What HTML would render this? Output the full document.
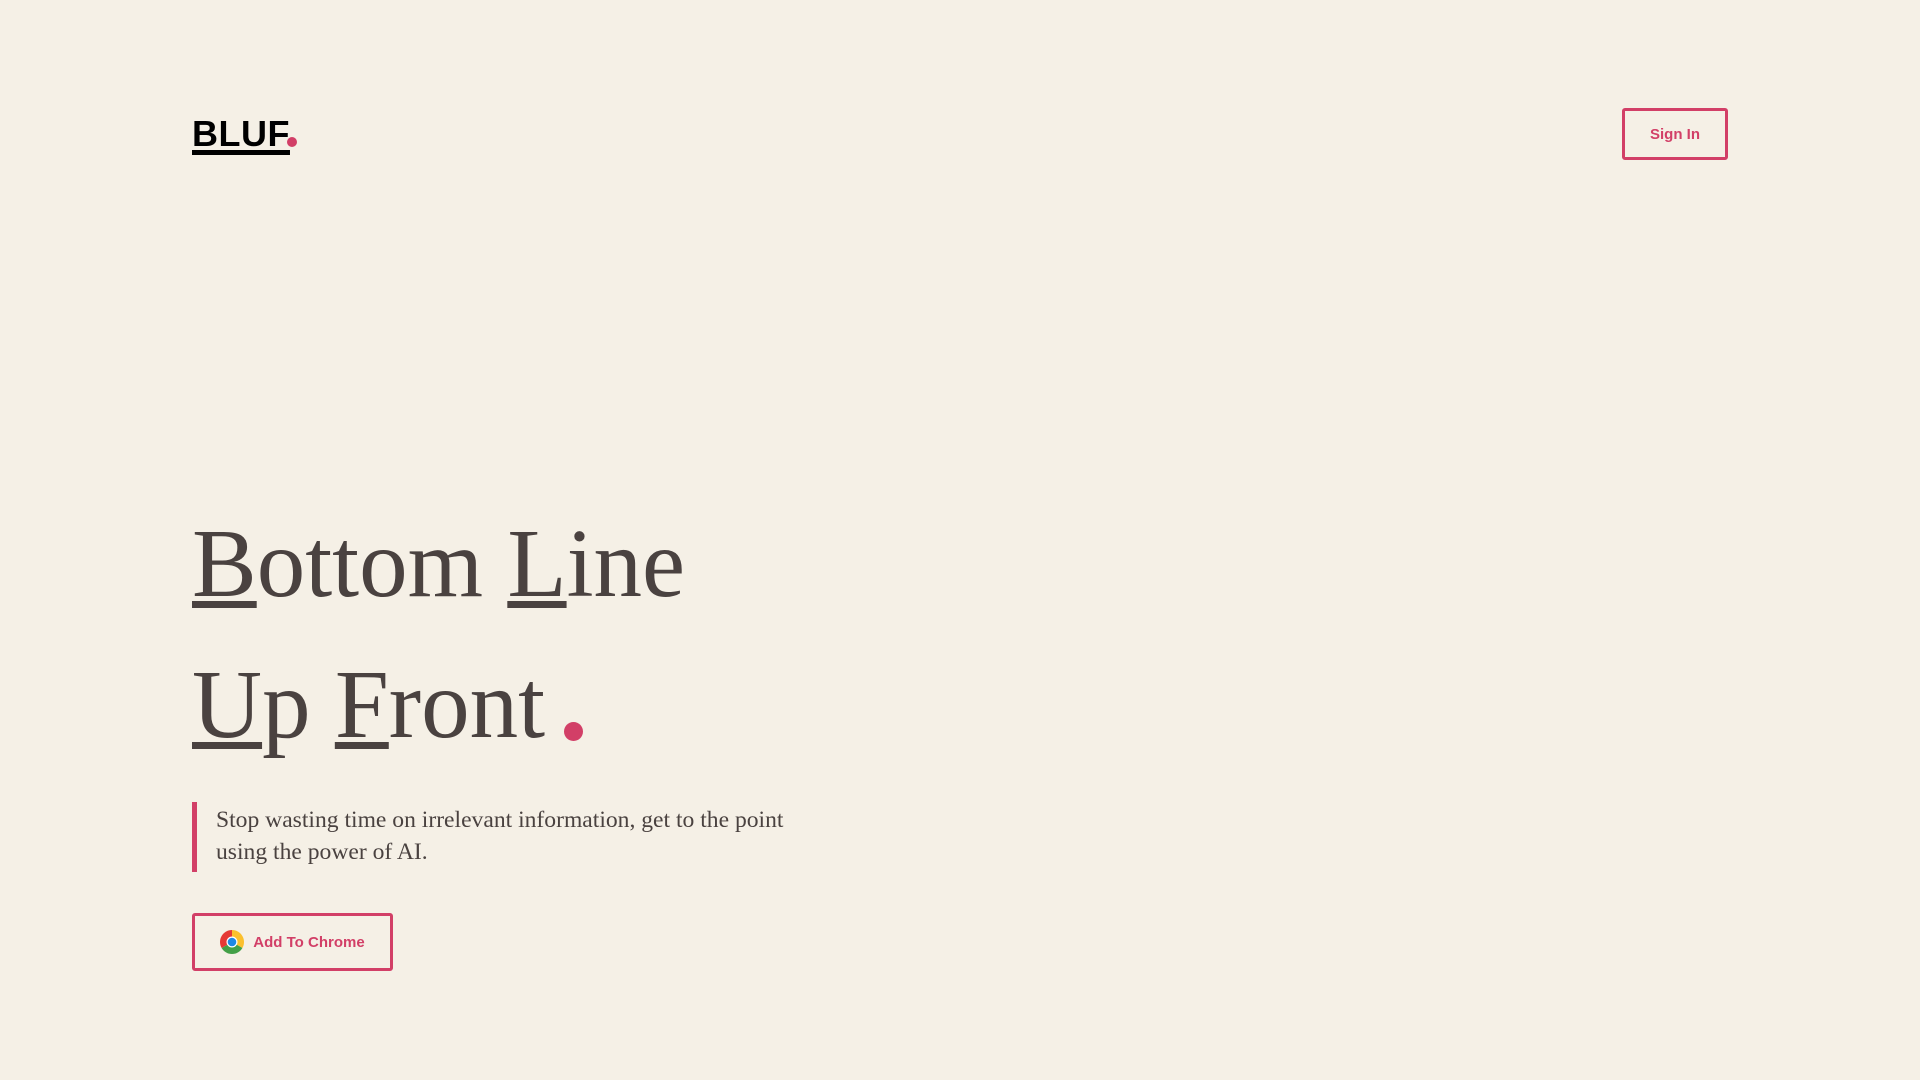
<!DOCTYPE html>
<html><head><meta charset="utf-8"><style>
html,body{margin:0;padding:0;background:#f5f0e6;width:1920px;height:1080px;overflow:hidden}
.logo{position:absolute;left:192px;top:113px;font-family:"Liberation Sans",sans-serif;font-weight:bold;font-size:36px;color:#000;letter-spacing:0.5px}
.logo u{text-decoration:underline;text-decoration-thickness:5px;text-underline-offset:4px}
.ldot{position:absolute;left:287px;top:137px;width:10px;height:10px;border-radius:50%;background:#d23f67}
.signin{position:absolute;left:1622px;top:108px;width:100px;height:46px;border:3px solid #d23f67;border-radius:3px;box-sizing:content-box;color:#d23f67;font-family:"Liberation Sans",sans-serif;font-size:15px;font-weight:bold;display:flex;align-items:center;justify-content:center}
h1{position:absolute;left:192px;top:0;margin:0;font-family:"Liberation Serif",serif;font-weight:normal;font-size:97px;color:#4a4240;line-height:141px}
h1 .l1{position:absolute;top:493px;white-space:nowrap}
h1 .l2{position:absolute;top:634px;white-space:nowrap}
h1 u{text-decoration:underline;text-decoration-thickness:7px;text-underline-offset:5px}
.hdot{position:absolute;left:564px;top:722px;width:19px;height:19px;border-radius:50%;background:#d23f67}
.quote{position:absolute;left:192px;top:802px;height:70px;border-left:5px solid #d23f67;padding-left:19px;font-family:"Liberation Serif",serif;font-size:23.6px;line-height:32px;color:#4a4240;width:720px;box-sizing:border-box}
.quote p{margin:0;position:relative;top:2px}
.btn{position:absolute;left:192px;top:913px;width:195px;height:52px;border:3px solid #d23f67;border-radius:3px;display:flex;align-items:center;justify-content:center;gap:9px;color:#d23f67;font-family:"Liberation Sans",sans-serif;font-weight:bold;font-size:15px}
</style></head><body>
<div class="logo"><u>BLUF</u></div><div class="ldot"></div>
<div class="signin">Sign In</div>
<h1><span class="l1"><u>B</u>ottom <u>L</u>ine</span><span class="l2"><u>U</u>p <u>F</u>ront</span></h1>
<div class="hdot"></div>
<div class="quote"><p>Stop wasting time on irrelevant information, get to the point<br>using the power of AI.</p></div>
<div class="btn"><svg width="24" height="24" viewBox="-12 -12 24 24">
<path d="M0 0 L0 -12 A12 12 0 0 1 10.39 6 Z" fill="#fbc02d"/>
<path d="M0 0 L10.39 6 A12 12 0 0 1 -10.39 6 Z" fill="#43a047"/>
<path d="M0 0 L-10.39 6 A12 12 0 0 1 0 -12 Z" fill="#e53935"/>
<circle r="5.5" fill="#fff"/><circle r="4.3" fill="#1e88e5"/></svg>Add To Chrome</div>
</body></html>
